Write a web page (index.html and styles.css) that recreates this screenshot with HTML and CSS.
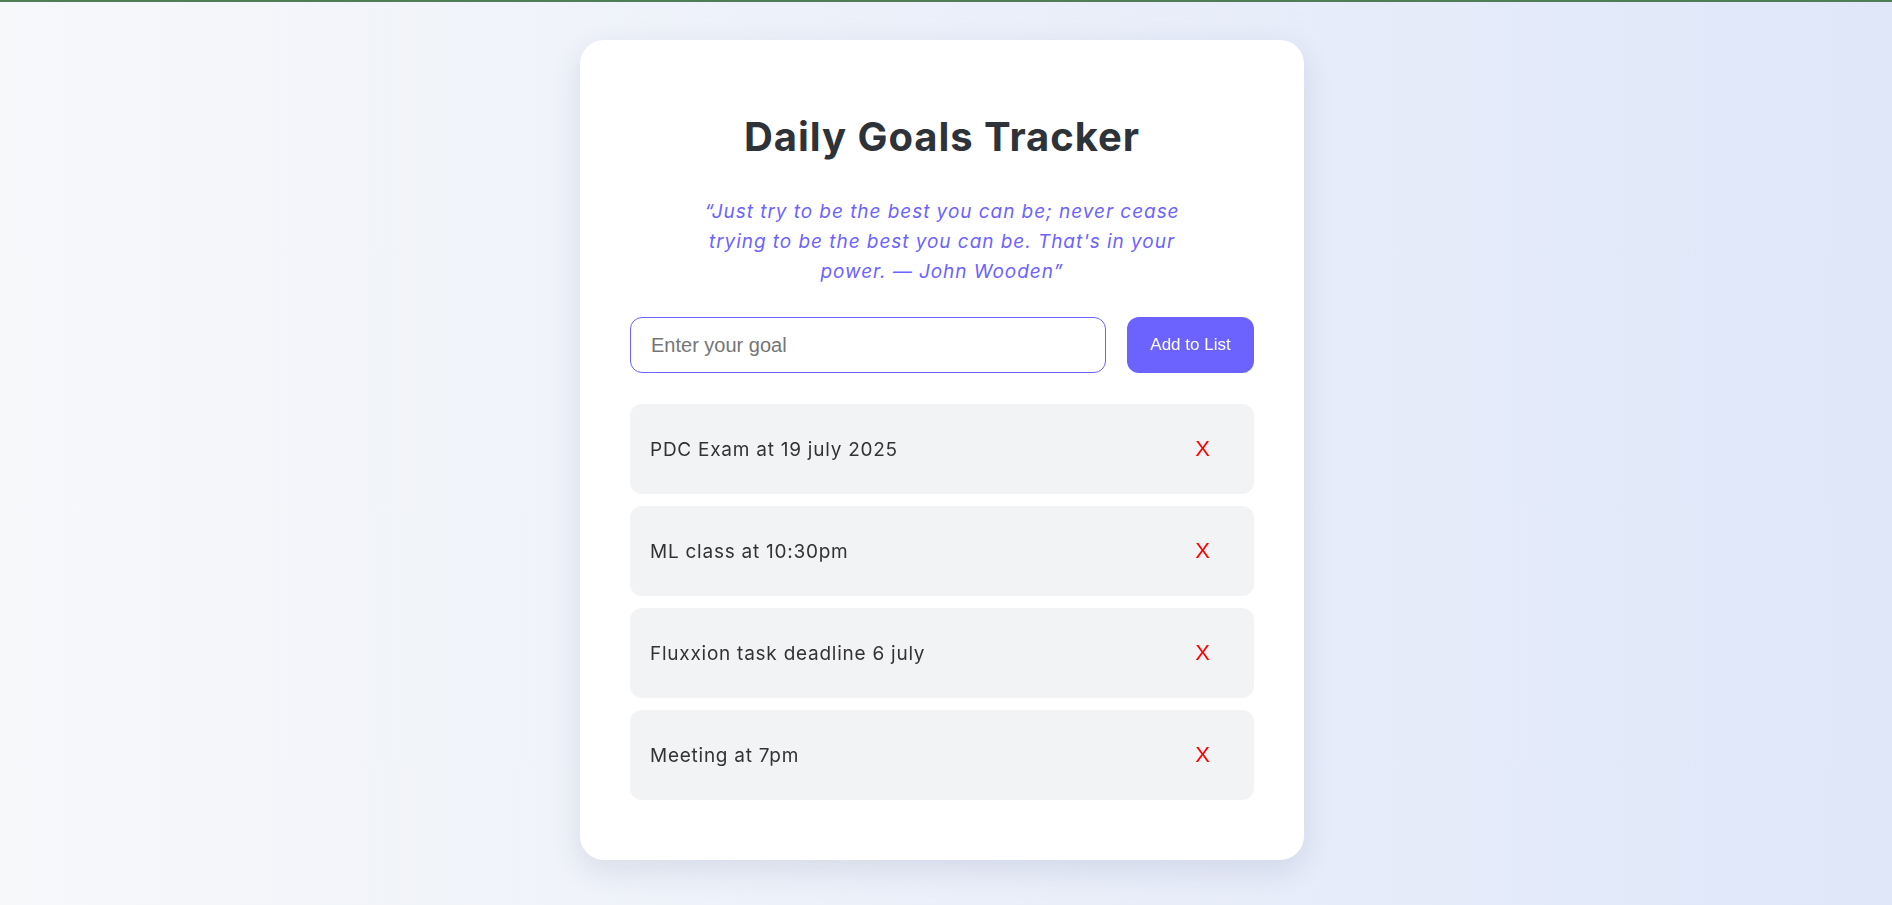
FILE: index.html
```html
<!DOCTYPE html>
<html lang="en">
<head>
<meta charset="UTF-8">
<title>Daily Goals Tracker</title>
<link rel="stylesheet" href="styles.css">
</head>
<body>
  <main class="card">
    <h1 class="title">Daily Goals Tracker</h1>
    <p class="quote">“Just try to be the best you can be; never cease trying to be the best you can be. That's in your power. — John Wooden”</p>
    <div class="entry">
      <input class="goal-input" type="text" placeholder="Enter your goal" autofocus>
      <button class="add-btn" type="button">Add to List</button>
    </div>
    <ul class="goals">
      <li class="goal"><span class="goal-text">PDC Exam at 19 july 2025</span><button class="remove" type="button">X</button></li>
      <li class="goal"><span class="goal-text">ML class at 10:30pm</span><button class="remove" type="button">X</button></li>
      <li class="goal"><span class="goal-text">Fluxxion task deadline 6 july</span><button class="remove" type="button">X</button></li>
      <li class="goal"><span class="goal-text">Meeting at 7pm</span><button class="remove" type="button">X</button></li>
    </ul>
  </main>
</body>
</html>
```
FILE: styles.css
```css
* { box-sizing: border-box; }

html, body { height: 100%; }

body {
  margin: 0;
  border-top: 2px solid #4f7d55;
  background: linear-gradient(to right, #f7f8fa, #dfe7f9);
  font-family: Inter, "Open Sans", sans-serif;
  display: flex;
  justify-content: center;
  align-items: flex-start;
  padding: 38px 8px 0 0;
}

.card {
  width: 724px;
  background: #ffffff;
  border-radius: 24px;
  padding: 50px 50px 60px;
  box-shadow: 0 10px 30px rgba(40, 60, 110, 0.12);
}

.title {
  margin: 23px 0 0;
  text-align: center;
  font-size: 40px;
  line-height: 48px;
  font-weight: 700;
  letter-spacing: 0.95px;
  color: #2d3339;
}

.quote {
  margin: 36px auto 0;
  max-width: 500px;
  text-align: center;
  font-style: italic;
  font-size: 19px;
  letter-spacing: 0.95px;
  line-height: 30px;
  color: #6c63ff;
}

.entry {
  margin-top: 30px;
  display: flex;
  gap: 21px;
}

.goal-input {
  flex: 1;
  height: 56px;
  border: 1px solid #6c63ff;
  border-radius: 12px;
  padding: 0 20px;
  font-family: "Liberation Sans", Arial, sans-serif;
  font-size: 20px;
  color: #333;
  outline: none;
  background: #fff;
}

.goal-input::placeholder { color: #757575; }

.add-btn {
  width: 127px;
  height: 56px;
  border: none;
  border-radius: 12px;
  background: #6c63ff;
  color: #ffffff;
  font-family: "Liberation Sans", Arial, sans-serif;
  font-size: 17px;
}

.goals {
  list-style: none;
  margin: 31px 0 0;
  padding: 0;
  display: flex;
  flex-direction: column;
  gap: 12px;
}

.goal {
  display: flex;
  align-items: center;
  justify-content: space-between;
  height: 90px;
  padding: 0 44px 0 20px;
  background: #f2f3f5;
  border-radius: 12px;
}

.goal-text {
  font-size: 19px;
  letter-spacing: 0.75px;
  color: #333333;
}

.remove {
  border: none;
  background: none;
  padding: 0;
  color: #ff0000;
  font-family: "Liberation Sans", Arial, sans-serif;
  font-size: 22px;
  line-height: 1;
}
```
